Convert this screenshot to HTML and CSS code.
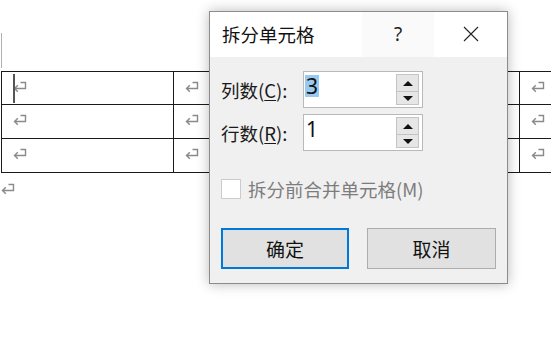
FILE: index.html
```html
<!DOCTYPE html>
<html>
<head>
<meta charset="utf-8">
<link rel="stylesheet" href="styles.css">
</head>
<body>
<div class="page">
  <div class="margin-mark"></div>
  <table class="doc-table">
    <tr>
      <td class="c1"><span class="caret"></span><svg class="ret" viewBox="0 0 14 12"><path d="M7.5 1.5H12.5V7.5H1.5M4.8 4.2L1.5 7.5L4.8 10.8"/></svg></td>
      <td class="c2"><svg class="ret" viewBox="0 0 14 12"><path d="M7.5 1.5H12.5V7.5H1.5M4.8 4.2L1.5 7.5L4.8 10.8"/></svg></td>
      <td class="c3"><svg class="ret" viewBox="0 0 14 12"><path d="M7.5 1.5H12.5V7.5H1.5M4.8 4.2L1.5 7.5L4.8 10.8"/></svg></td>
    </tr>
    <tr>
      <td class="c1"><svg class="ret" viewBox="0 0 14 12"><path d="M7.5 1.5H12.5V7.5H1.5M4.8 4.2L1.5 7.5L4.8 10.8"/></svg></td>
      <td class="c2"><svg class="ret" viewBox="0 0 14 12"><path d="M7.5 1.5H12.5V7.5H1.5M4.8 4.2L1.5 7.5L4.8 10.8"/></svg></td>
      <td class="c3"><svg class="ret" viewBox="0 0 14 12"><path d="M7.5 1.5H12.5V7.5H1.5M4.8 4.2L1.5 7.5L4.8 10.8"/></svg></td>
    </tr>
    <tr>
      <td class="c1"><svg class="ret" viewBox="0 0 14 12"><path d="M7.5 1.5H12.5V7.5H1.5M4.8 4.2L1.5 7.5L4.8 10.8"/></svg></td>
      <td class="c2"><svg class="ret" viewBox="0 0 14 12"><path d="M7.5 1.5H12.5V7.5H1.5M4.8 4.2L1.5 7.5L4.8 10.8"/></svg></td>
      <td class="c3"><svg class="ret" viewBox="0 0 14 12"><path d="M7.5 1.5H12.5V7.5H1.5M4.8 4.2L1.5 7.5L4.8 10.8"/></svg></td>
    </tr>
  </table>
  <div class="after-para"><svg class="ret" viewBox="0 0 14 12"><path d="M7.5 1.5H12.5V7.5H1.5M4.8 4.2L1.5 7.5L4.8 10.8"/></svg></div>
</div>

<div class="dialog">
  <div class="titlebar">
    <div class="title">拆分单元格</div>
    <div class="help">?</div>
    <div class="close"><svg viewBox="0 0 16 16"><path d="M1 1L15 15M15 1L1 15"/></svg></div>
  </div>
  <div class="body">
    <div class="field">
      <label class="label">列数(<u>C</u>):</label>
      <div class="spinbox">
        <div class="value"><span class="sel">3</span></div>
        <div class="spin">
          <div class="sbtn up"><i></i></div>
          <div class="sbtn down"><i></i></div>
        </div>
      </div>
    </div>
    <div class="field">
      <label class="label">行数(<u>R</u>):</label>
      <div class="spinbox">
        <div class="value"><span>1</span></div>
        <div class="spin">
          <div class="sbtn up"><i></i></div>
          <div class="sbtn down"><i></i></div>
        </div>
      </div>
    </div>
    <div class="check-row">
      <span class="checkbox"></span>
      <span class="check-label">拆分前合并单元格(M)</span>
    </div>
    <div class="buttons">
      <div class="btn primary">确定</div>
      <div class="btn">取消</div>
    </div>
  </div>
</div>
</body>
</html>
```

FILE: styles.css
```css
html, body {
  margin: 0;
  padding: 0;
  background: #ffffff;
  width: 551px;
  height: 342px;
  overflow: hidden;
  font-family: "Noto Sans CJK SC", "Noto Sans", sans-serif;
}

.page {
  padding-top: 33px;
  width: 551px;
  overflow: hidden;
}

.margin-mark {
  width: 1px;
  height: 35px;
  background: #b0b0b0;
  margin-left: 1px;
}

.doc-table {
  border-collapse: collapse;
  margin-top: 3px;
  margin-left: 1px;
  table-layout: fixed;
  width: 552px;
}

.doc-table td {
  border: 1px solid #1a1a1a;
  height: 34px;
  padding: 0 0 0 11px;
  vertical-align: top;
  position: relative;
  box-sizing: border-box;
}

.doc-table tr:first-child td {
  height: 33px;
}

.doc-table td.c1 { width: 172px; }
.doc-table td.c2 { width: 346px; }
.doc-table td.c3 { width: 34px; }

.ret {
  display: block;
  width: 14px;
  height: 12px;
  margin-top: 9px;
  fill: none;
  stroke: #8a8a8a;
  stroke-width: 1.4;
}

.caret {
  position: absolute;
  left: 11px;
  top: 2px;
  width: 2px;
  height: 29px;
  background: #555;
}

.after-para {
  padding-left: 1px;
}

.after-para .ret {
  margin-top: 10px;
}

/* dialog */
.dialog {
  position: absolute;
  left: 209px;
  top: 11px;
  width: 299px;
  height: 273px;
  box-sizing: border-box;
  border: 1px solid #8c8c8c;
  background: #f0f0f0;
  box-shadow: 0 0 12px rgba(0, 0, 0, 0.28);
  display: flex;
  flex-direction: column;
}

.titlebar {
  height: 45px;
  background: #ffffff;
  display: flex;
  align-items: stretch;
}

.title {
  flex: 1;
  padding-left: 12px;
  font-size: 18.5px;
  color: #111;
  display: flex;
  align-items: center;
  padding-bottom: 1px;
}

.help {
  width: 72px;
  background: #fafafa;
  display: flex;
  align-items: center;
  justify-content: center;
  font-family: "Noto Sans", sans-serif;
  font-size: 19px;
  color: #222;
  padding-bottom: 2px;
}

.close {
  width: 73px;
  display: flex;
  align-items: center;
  justify-content: center;
  padding-bottom: 2px;
}

.close svg {
  width: 16px;
  height: 16px;
  fill: none;
  stroke: #222;
  stroke-width: 1.1;
}

.body {
  flex: 1;
  padding: 14px 11px 14px 11px;
  display: flex;
  flex-direction: column;
}

.field {
  display: flex;
  align-items: center;
  height: 37px;
  margin-bottom: 6px;
}

.label {
  width: 82px;
  font-size: 18.5px;
  color: #1a1a1a;
}

.label u {
  text-decoration: underline;
  text-underline-offset: 2px;
}

.spinbox {
  width: 120px;
  height: 37px;
  box-sizing: border-box;
  border: 1px solid #b9b9b9;
  background: #ffffff;
  display: flex;
}

.value {
  flex: 1;
  padding: 3px 0 0 1px;
  font-family: "Noto Sans", sans-serif;
  font-size: 21px;
  line-height: 22px;
  color: #111;
}

.value span {
  display: inline-block;
  height: 22px;
  padding: 0 1px;
}

.value .sel {
  background: #99c9ef;
}

.spin {
  width: 23px;
  margin: 2px 3px 2px 0;
  display: flex;
  flex-direction: column;
}

.sbtn {
  box-sizing: border-box;
  border: 1px solid #c4c4c4;
  background: #e6e6e6;
  display: flex;
  align-items: center;
  justify-content: center;
}

.sbtn.up {
  height: 18px;
}

.sbtn.down {
  height: 14px;
  margin-top: -1px;
}

.sbtn i {
  width: 0;
  height: 0;
  border-left: 5px solid transparent;
  border-right: 5px solid transparent;
}

.sbtn.up i {
  border-bottom: 5px solid #111;
}

.sbtn.down i {
  border-top: 5px solid #111;
}

.check-row {
  display: flex;
  align-items: center;
  margin-top: 22px;
  height: 20px;
}

.checkbox {
  width: 20px;
  height: 20px;
  box-sizing: border-box;
  border: 1px solid #cccccc;
  background: #ffffff;
  margin-right: 7px;
}

.check-label {
  font-size: 18.5px;
  color: #7d7d7d;
}

.buttons {
  display: flex;
  gap: 18px;
  margin-top: auto;
}

.btn {
  width: 129px;
  height: 41px;
  box-sizing: border-box;
  border: 1px solid #adadad;
  background: #e1e1e1;
  display: flex;
  align-items: center;
  justify-content: center;
  font-size: 19px;
  color: #111;
}

.btn.primary {
  width: 128px;
  border: 2px solid #0078d7;
}
```
